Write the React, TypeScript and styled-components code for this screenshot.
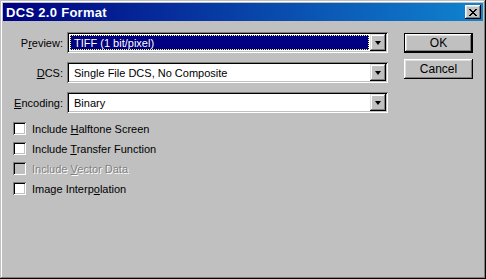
import styled, { createGlobalStyle } from 'styled-components'

const GlobalStyle = createGlobalStyle`
    html, body {
        margin: 0;
        padding: 0;
        background: #c0c0c0;
    }
    body {
        font-family: "Liberation Sans", Arial, sans-serif;
        font-size: 11px;
        color: #000;
    }
`

const Window = styled.div`
    width: 486px;
    height: 279px;
    box-sizing: border-box;
    padding: 3px;
    background: #c0c0c0;
    box-shadow:
        inset -1px -1px #000,
        inset 1px 1px #c0c0c0,
        inset -2px -2px #808080,
        inset 2px 2px #fff;
    display: flex;
    flex-direction: column;
`

const TitleBar = styled.div`
    height: 18px;
    display: flex;
    align-items: center;
    justify-content: space-between;
    padding: 0 2px 0 3px;
    background: linear-gradient(to right, #000080, #1084d0);
`

const Title = styled.span`
    color: #fff;
    font-weight: bold;
    font-size: 13px;
    letter-spacing: 0.3px;
`

const CloseButton = styled.div`
    width: 16px;
    height: 14px;
    box-sizing: border-box;
    display: flex;
    align-items: center;
    justify-content: center;
    background: #c0c0c0;
    box-shadow:
        inset -1px -1px #000,
        inset 1px 1px #fff,
        inset -2px -2px #808080,
        inset 2px 2px #dfdfdf;
`

const Body = styled.div`
    flex: 1;
    display: flex;
    gap: 16px;
    padding: 11px 9px 0 10px;
`

const LeftColumn = styled.div`
    display: flex;
    flex-direction: column;
`

const Form = styled.div`
    display: grid;
    grid-template-columns: 54px 321px;
    row-gap: 9px;
    align-items: center;
`

const Label = styled.label`
    text-align: right;
    padding-right: 4px;
    white-space: nowrap;
`

const Combo = styled.div`
    height: 21px;
    box-sizing: border-box;
    padding: 2px;
    background: #fff;
    display: flex;
    box-shadow:
        inset 1px 1px #808080,
        inset -1px -1px #fff,
        inset 2px 2px #000,
        inset -2px -2px #c0c0c0;
`

const ComboValue = styled.div<{ $focused?: boolean }>`
    flex: 1;
    display: flex;
    align-items: center;
    padding-left: 4px;
    margin: 1px;
    white-space: nowrap;
    ${p => p.$focused && `
        background: #000080;
        color: #fff;
        outline: 1px dotted #ffff80;
        outline-offset: -1px;
    `}
`

const DropButton = styled.div`
    width: 16px;
    height: 17px;
    box-sizing: border-box;
    display: flex;
    align-items: center;
    justify-content: center;
    background: #c0c0c0;
    box-shadow:
        inset -1px -1px #000,
        inset 1px 1px #dfdfdf,
        inset -2px -2px #808080,
        inset 2px 2px #fff;
`

const Arrow = styled.div`
    width: 0;
    height: 0;
    border-left: 3.5px solid transparent;
    border-right: 3.5px solid transparent;
    border-top: 4px solid #000;
    margin-top: 1px;
`

const Checks = styled.div`
    display: flex;
    flex-direction: column;
    gap: 7px;
    margin-top: 9px;
`

const CheckRow = styled.div<{ $disabled?: boolean }>`
    display: flex;
    align-items: center;
    height: 13px;
    gap: 6px;
    white-space: nowrap;
    color: ${p => (p.$disabled ? '#808080' : '#000')};
    text-shadow: ${p => (p.$disabled ? '1px 1px #fff' : 'none')};
`

const Box = styled.span<{ $disabled?: boolean }>`
    width: 13px;
    height: 13px;
    box-sizing: border-box;
    flex-shrink: 0;
    background: ${p => (p.$disabled ? '#c0c0c0' : '#fff')};
    box-shadow:
        inset 1px 1px #808080,
        inset -1px -1px #fff,
        inset 2px 2px #000,
        inset -2px -2px #c0c0c0;
`

const Buttons = styled.div`
    display: flex;
    flex-direction: column;
    gap: 6px;
    padding-top: 1px;
`

const Button = styled.button<{ $default?: boolean }>`
    width: 69px;
    height: 20px;
    box-sizing: border-box;
    padding: 0;
    font: inherit;
    font-size: 12px;
    color: #000;
    background: #c0c0c0;
    border: ${p => (p.$default ? '1px solid #000' : 'none')};
    box-shadow:
        inset -1px -1px #000,
        inset 1px 1px #fff,
        inset -2px -2px #808080,
        inset 2px 2px #dfdfdf;
`

const combos = [
    { label: <>P<u>r</u>eview:</>, value: 'TIFF  (1 bit/pixel)', focused: true },
    { label: <><u>D</u>CS:</>, value: 'Single File DCS, No Composite' },
    { label: <><u>E</u>ncoding:</>, value: 'Binary' },
]

const checks = [
    { text: <>Include <u>H</u>alftone Screen</> },
    { text: <>Include <u>T</u>ransfer Function</> },
    { text: <>Include <u>V</u>ector Data</>, disabled: true },
    { text: <>Image Interp<u>o</u>lation</> },
]

export default function App() {
    return (
        <>
            <GlobalStyle />
            <Window>
                <TitleBar>
                    <Title>DCS 2.0 Format</Title>
                    <CloseButton>
                        <svg width="8" height="7" viewBox="0 0 8 7" shapeRendering="crispEdges">
                            <path d="M0 0h2v1h-2z M6 0h2v1h-2z M1 1h2v1h-2z M5 1h2v1h-2z M2 2h4v1h-4z M3 3h2v1h-2z M2 4h4v1h-4z M1 5h2v1h-2z M5 5h2v1h-2z M0 6h2v1h-2z M6 6h2v1h-2z" fill="#000" />
                        </svg>
                    </CloseButton>
                </TitleBar>
                <Body>
                    <LeftColumn>
                        <Form>
                            {combos.flatMap((c, i) => [
                                <Label key={'l' + i}>{c.label}</Label>,
                                <Combo key={'c' + i}>
                                    <ComboValue $focused={c.focused}>{c.value}</ComboValue>
                                    <DropButton><Arrow /></DropButton>
                                </Combo>,
                            ])}
                        </Form>
                        <Checks>
                            {checks.map((c, i) => (
                                <CheckRow key={i} $disabled={c.disabled}>
                                    <Box $disabled={c.disabled} />
                                    <span>{c.text}</span>
                                </CheckRow>
                            ))}
                        </Checks>
                    </LeftColumn>
                    <Buttons>
                        <Button $default>OK</Button>
                        <Button>Cancel</Button>
                    </Buttons>
                </Body>
            </Window>
        </>
    )
}
